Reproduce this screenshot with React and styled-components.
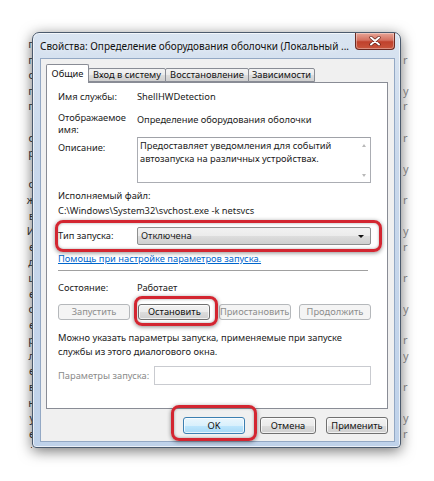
import React from 'react'
import styled, { createGlobalStyle } from 'styled-components'

const GlobalStyle = createGlobalStyle`
  html, body { margin: 0; padding: 0; background: #ffffff; }
  body { font-family: "Noto Sans", "Liberation Sans", sans-serif; color: #1b1b1b; }
`

const Page = styled.div`
  width: 434px;
  height: 481px;
  box-sizing: border-box;
  padding-top: 32px;
  display: flex;
  align-items: flex-start;
  overflow: hidden;
`

const BackColumn = styled.div`
  flex: none;
  width: ${p => p.$w}px;
  height: 412px;
  padding-top: 4px;
  overflow: hidden;
  display: flex;
  flex-direction: column;
  align-items: ${p => (p.$side === 'left' ? 'flex-end' : 'flex-start')};
  font-size: 11px;
  line-height: 15.6px;
  color: #3a3a3a;
  opacity: ${p => (p.$side === 'left' ? 1 : 0.6)};
`

const BackLetter = styled.span`
  white-space: nowrap;
  margin-right: ${p => (p.$side === 'left' ? '-3px' : '0')};
  margin-left: ${p => (p.$side === 'right' ? '2px' : '0')};
`

const Frame = styled.div`
  position: relative;
  flex: none;
  width: 369px;
  height: 416px;
  box-sizing: border-box;
  border: 1px solid #4b5a6d;
  border-radius: 7px 7px 4px 4px;
  background: linear-gradient(180deg, #d9e4f1 0%, #c9d8eb 30%, #bfd2ea 100%);
  box-shadow: 0 3px 14px rgba(0, 0, 0, 0.55), inset 0 0 0 1px rgba(255, 255, 255, 0.65);
  padding: 0 5px 5px 7px;
  display: flex;
  flex-direction: column;
`

const TitleBar = styled.div`
  height: 25px;
  display: flex;
  align-items: flex-start;
  flex: none;
`

const TitleText = styled.div`
  padding-top: 6px;
  font-size: 10px;
  line-height: 14px;
  color: #101010;
  white-space: nowrap;
  text-shadow: 0 0 6px rgba(255, 255, 255, 0.9);
`

const CloseButton = styled.div`
  margin-left: auto;
  width: 40px;
  height: 17px;
  box-sizing: border-box;
  border: 1px solid #6b2a22;
  border-top: none;
  border-radius: 0 0 4px 4px;
  background: linear-gradient(180deg, #e8a597 0%, #d4705f 45%, #c0412c 55%, #c9553c 100%);
  box-shadow: inset 0 0 0 1px rgba(255, 255, 255, 0.35);
  display: flex;
  align-items: center;
  justify-content: center;
`

const Client = styled.div`
  flex: 1;
  box-sizing: border-box;
  border: 1px solid #93a8c4;
  background: #f0f0f0;
  padding: 5px 6px 0 5px;
  display: flex;
  flex-direction: column;
`

const TabStrip = styled.div`
  height: 18px;
  display: flex;
  align-items: flex-end;
  flex: none;
`

const Tab = styled.div`
  position: relative;
  width: ${p => p.$w}px;
  height: ${p => (p.$active ? 19 : 14)}px;
  margin-bottom: ${p => (p.$active ? -1 : 0)}px;
  margin-left: ${p => (p.$first ? 0 : -1)}px;
  z-index: ${p => (p.$active ? 2 : 1)};
  box-sizing: border-box;
  border: 1px solid #898c95;
  border-bottom: ${p => (p.$active ? 'none' : '1px solid #898c95')};
  border-radius: 2px 2px 0 0;
  background: ${p => (p.$active ? '#ffffff' : 'linear-gradient(180deg, #f3f3f3 0%, #ebebeb 50%, #dddddd 51%, #cfcfcf 100%)')};
  font-size: 9.3px;
  line-height: 12px;
  text-align: center;
  padding-top: ${p => (p.$active ? 3 : 0)}px;
  white-space: nowrap;
  color: #111;
`

const Panel = styled.div`
  height: 327px;
  flex: none;
  box-sizing: border-box;
  border: 1px solid #898c95;
  background: #ffffff;
  padding: 8px 16px 0 11px;
  display: flex;
  flex-direction: column;
  font-size: 9.3px;
  line-height: 12px;
`

const FieldRow = styled.div`
  display: grid;
  grid-template-columns: 79px 1fr;
  align-items: ${p => p.$align || 'start'};
  margin-top: ${p => p.$mt || 0}px;
`

const Label = styled.div`
  line-height: ${p => p.$lh || 12}px;
  padding-top: ${p => p.$pt || 0}px;
  color: ${p => (p.$disabled ? '#8a8a8a' : '#1b1b1b')};
  white-space: nowrap;
`

const Value = styled.div`
  padding-top: ${p => p.$pt || 0}px;
  white-space: nowrap;
`

const TextLine = styled.div`
  margin-top: ${p => p.$mt || 0}px;
  line-height: ${p => p.$lh || 12}px;
  white-space: nowrap;
`

const DescBox = styled.div`
  height: 46px;
  box-sizing: border-box;
  border: 1px solid #abadb3;
  border-top-color: #a0a2a8;
  display: flex;
  line-height: 13px;
`

const DescText = styled.div`
  flex: 1;
  padding: 1px 0 0 2px;
  white-space: nowrap;
`

const ScrollTrack = styled.div`
  width: 12px;
  display: flex;
  flex-direction: column;
  justify-content: space-between;
  align-items: center;
  padding: 6px 0 5px;
`

const Arrow = styled.div`
  width: 0;
  height: 0;
  border-left: 2.5px solid transparent;
  border-right: 2.5px solid transparent;
  ${p => (p.$up ? 'border-bottom: 3px solid #b9b9b9;' : 'border-top: 3px solid #b9b9b9;')}
`

const Highlight = styled.div`
  position: relative;
  margin-top: ${p => p.$mt || 0}px;
  &::after {
    content: '';
    position: absolute;
    top: ${p => -p.$t}px;
    left: ${p => -p.$l}px;
    right: ${p => -p.$r}px;
    bottom: ${p => -p.$b}px;
    border: 3px solid #d32631;
    border-radius: 8px;
    box-shadow: 0 1px 4px rgba(0, 0, 0, 0.45), inset 0 0 3px rgba(0, 0, 0, 0.35);
    pointer-events: none;
    z-index: 3;
  }
`

const Select = styled.div`
  height: 18px;
  box-sizing: border-box;
  border: 1px solid #8e8f8f;
  border-radius: 2px;
  background: linear-gradient(180deg, #f2f2f2 0%, #ebebeb 50%, #dddddd 51%, #cfcfcf 100%);
  display: flex;
  align-items: center;
  padding: 0 6px 0 3px;
`

const SelectArrow = styled.div`
  margin-left: auto;
  width: 0;
  height: 0;
  border-left: 3px solid transparent;
  border-right: 3px solid transparent;
  border-top: 3px solid #111;
`

const HelpLink = styled.a`
  margin-top: 8px;
  line-height: 12px;
  color: #0066cc;
  text-decoration: underline;
  white-space: nowrap;
`

const Separator = styled.div`
  margin-top: 5px;
  margin-right: 3px;
  height: 1px;
  background: #a0a0a0;
  border-bottom: 1px solid #ffffff;
`

const ServiceButtons = styled.div`
  margin-top: 10px;
  display: flex;
  justify-content: space-between;
`

const Button = styled.div`
  width: ${p => p.$w || 72}px;
  height: ${p => p.$h || 16}px;
  box-sizing: border-box;
  border: 1px solid ${p => (p.$primary ? '#3c7fb1' : p.$disabled ? '#b5b8bb' : '#707070')};
  border-radius: 3px;
  background: ${p =>
    p.$primary
      ? 'linear-gradient(180deg, #eaf6fd 0%, #d9f0fc 50%, #bee6fd 51%, #a7d9f5 100%)'
      : p.$disabled
      ? '#f4f4f4'
      : 'linear-gradient(180deg, #f2f2f2 0%, #ebebeb 50%, #dddddd 51%, #cfcfcf 100%)'};
  box-shadow: inset 0 0 0 1px ${p => (p.$disabled ? 'rgba(255,255,255,0)' : 'rgba(255,255,255,0.7)')};
  color: ${p => (p.$disabled ? '#8d8d8d' : '#111')};
  font-size: 9.3px;
  display: flex;
  align-items: center;
  justify-content: center;
  white-space: nowrap;
`

const ParamsRow = styled.div`
  margin-top: 7px;
  display: flex;
  align-items: center;
  gap: 5px;
`

const Input = styled.div`
  flex: 1;
  height: 19px;
  box-sizing: border-box;
  border: 1px solid #c9cbd0;
  background: #ffffff;
`

const DialogButtons = styled.div`
  margin-top: 8px;
  display: flex;
  justify-content: flex-end;
  align-items: flex-start;
`

const DialogSlot = styled.div`
  margin-left: ${p => p.$ml || 0}px;
`

const leftLetters = ['п', 'п', 'о', 'п', 'п', ':', 'о', 'р', '-', 'о', 'ж', 'в', 'И', 'е', 'д', 'ц', 'е', 'о', 'е', 'р', 'л', 'е', 'в', 'н', 'у', 'е', 'г']
const rightLetters = ['', 'r', '', 'y', 'r', '', 'r', '', 'y', '', 'r', '', 'y', 'r', '', 'r', '', 'y', '', 'r', 'y', '', 'r', '', 'y', 'r']

function CloseGlyph() {
  return (
    <svg width="12" height="10" viewBox="0 0 12 10">
      <path d="M2 1.5 L10 8.5 M10 1.5 L2 8.5" stroke="#5a1a12" strokeWidth="3.2" strokeLinecap="round" />
      <path d="M2 1.5 L10 8.5 M10 1.5 L2 8.5" stroke="#ffffff" strokeWidth="2" strokeLinecap="round" />
    </svg>
  )
}

export default function App() {
  return (
    <>
      <GlobalStyle />
      <Page>
        <BackColumn $w={32} $side="left">
          {leftLetters.map((l, i) => (
            <BackLetter key={i} $side="left">{l || '\u00a0'}</BackLetter>
          ))}
        </BackColumn>
        <Frame>
          <TitleBar>
            <TitleText>Свойства: Определение оборудования оболочки (Локальный ...</TitleText>
            <CloseButton>
              <CloseGlyph />
            </CloseButton>
          </TitleBar>
          <Client>
            <TabStrip>
              <Tab $w={43} $first $active>Общие</Tab>
              <Tab $w={78}>Вход в систему</Tab>
              <Tab $w={84}>Восстановление</Tab>
              <Tab $w={67}>Зависимости</Tab>
            </TabStrip>
            <Panel>
              <FieldRow>
                <Label>Имя службы:</Label>
                <Value>ShellHWDetection</Value>
              </FieldRow>
              <FieldRow $mt={9}>
                <Label $lh={11.5}>Отображаемое<br />имя:</Label>
                <Value $pt={2}>Определение оборудования оболочки</Value>
              </FieldRow>
              <FieldRow $mt={2}>
                <Label $pt={5}>Описание:</Label>
                <DescBox>
                  <DescText>
                    Предоставляет уведомления для событий<br />
                    автозапуска на различных устройствах.
                  </DescText>
                  <ScrollTrack>
                    <Arrow $up />
                    <Arrow />
                  </ScrollTrack>
                </DescBox>
              </FieldRow>
              <TextLine $mt={7}>Исполняемый файл:</TextLine>
              <TextLine $mt={3}>C:\Windows\System32\svchost.exe -k netsvcs</TextLine>
              <Highlight $mt={10} $t={7} $l={3} $r={11} $b={7}>
                <FieldRow $align="center">
                  <Label>Тип запуска:</Label>
                  <Select>
                    Отключена
                    <SelectArrow />
                  </Select>
                </FieldRow>
              </Highlight>
              <HelpLink>Помощь при настройке параметров запуска.</HelpLink>
              <Separator />
              <FieldRow $mt={10}>
                <Label>Состояние:</Label>
                <Value>Работает</Value>
              </FieldRow>
              <ServiceButtons>
                <Button $disabled>Запустить</Button>
                <Highlight $t={8} $l={4} $r={8} $b={6}>
                  <Button>Остановить</Button>
                </Highlight>
                <Button $disabled>Приостановить</Button>
                <Button $disabled>Продолжить</Button>
              </ServiceButtons>
              <TextLine $mt={11} $lh={14}>
                Можно указать параметры запуска, применяемые при запуске<br />
                службы из этого диалогового окна.
              </TextLine>
              <ParamsRow>
                <Label $disabled>Параметры запуска:</Label>
                <Input />
              </ParamsRow>
            </Panel>
            <DialogButtons>
              <Highlight $t={12} $l={12} $r={12} $b={7}>
                <Button $primary $w={62} $h={17}>OK</Button>
              </Highlight>
              <DialogSlot $ml={15}>
                <Button $w={56} $h={17}>Отмена</Button>
              </DialogSlot>
              <DialogSlot $ml={10}>
                <Button $w={62} $h={17}>Применить</Button>
              </DialogSlot>
            </DialogButtons>
          </Client>
        </Frame>
        <BackColumn $w={33} $side="right">
          {rightLetters.map((l, i) => (
            <BackLetter key={i} $side="right">{l || '\u00a0'}</BackLetter>
          ))}
        </BackColumn>
      </Page>
    </>
  )
}
